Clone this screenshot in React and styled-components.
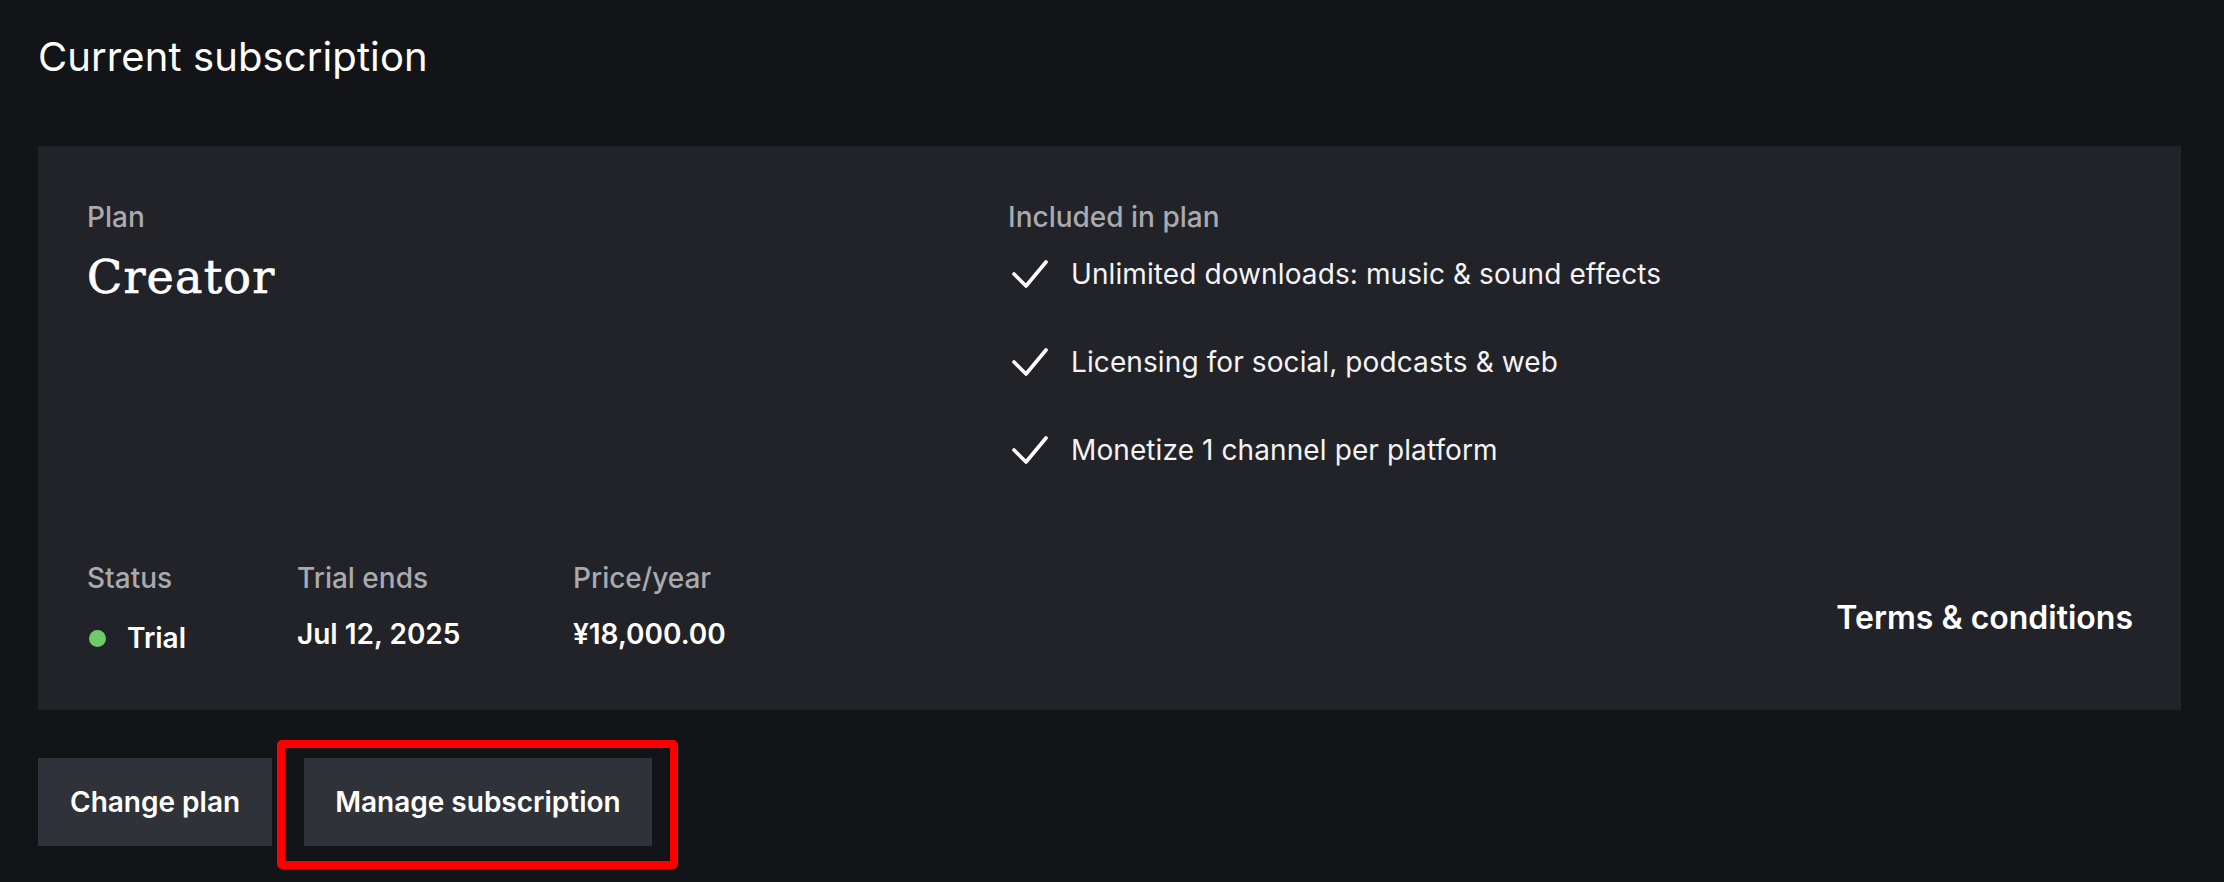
import React from 'react';
import styled, { createGlobalStyle } from 'styled-components';

const GlobalStyle = createGlobalStyle`
    html, body {
        margin: 0;
        padding: 0;
        background: #131418;
    }
    body {
        font-family: Inter, "Noto Sans", "Liberation Sans", sans-serif;
        color: #ffffff;
        -webkit-font-smoothing: antialiased;
    }
`;

const Page = styled.main`
    min-height: 100vh;
    box-sizing: border-box;
    padding: 33px 43px 0 38px;
`;

const Title = styled.h2`
    margin: 0 0 65px;
    font-size: 40px;
    line-height: 48px;
    font-weight: 400;
    letter-spacing: 0.1px;
    color: #ffffff;
`;

const Card = styled.section`
    background: #222328;
    padding: 54px 48px 55px 49px;
    display: flex;
    flex-direction: column;
    gap: 94px;
`;

const TopRow = styled.div`
    display: grid;
    grid-template-columns: 921px 1fr;
`;

const Label = styled.div`
    font-size: 28px;
    line-height: 34px;
    font-weight: 500;
    color: #a9aaaf;
`;

const PlanName = styled.div`
    margin-top: 17px;
    font-family: "DejaVu Serif", "Liberation Serif", serif;
    font-size: 46px;
    line-height: 52px;
    letter-spacing: 1.2px;
    -webkit-text-stroke: 0.7px #ffffff;
    color: #ffffff;
`;

const FeatureList = styled.ul`
    list-style: none;
    margin: 23px 0 0;
    padding: 0;
    display: flex;
    flex-direction: column;
    gap: 54px;
`;

const Feature = styled.li`
    display: flex;
    align-items: center;
    gap: 23px;
    font-size: 28px;
    line-height: 34px;
    letter-spacing: 0.1px;
    color: #f4f4f5;
    padding-left: 4px;
`;

const BottomRow = styled.div`
    display: flex;
    align-items: flex-start;
`;

const Stat = styled.div`
    width: ${props => props.width ? props.width + 'px' : 'auto'};
    display: flex;
    flex-direction: column;
    gap: 22px;
`;

const Value = styled.div`
    display: flex;
    align-items: center;
    gap: 21px;
    font-size: 28px;
    line-height: 34px;
    font-weight: 600;
    color: #ffffff;
    padding-top: ${props => props.offset || 0}px;
`;

const Dot = styled.span`
    width: 17px;
    height: 17px;
    border-radius: 50%;
    background: #72c96b;
    margin-left: 2px;
`;

const TermsLink = styled.a`
    margin-left: auto;
    margin-top: 38px;
    font-size: 32px;
    line-height: 38px;
    font-weight: 600;
    color: #ffffff;
    text-decoration: none;
    cursor: pointer;
`;

const Actions = styled.div`
    display: flex;
    gap: 32px;
    margin-top: 48px;
`;

const Highlight = styled.div`
    position: relative;
    display: flex;
    &:after {
        content: '';
        position: absolute;
        top: -18px;
        left: -27px;
        right: -26px;
        bottom: -23px;
        border: 8px solid #ff0000;
        border-radius: 5px;
        pointer-events: none;
    }
`;

const Button = styled.button`
    height: 88px;
    padding: 0 ${props => props.pad || 32}px;
    border: none;
    border-radius: 0;
    background: #30323a;
    color: #ffffff;
    font-family: Inter, "Noto Sans", "Liberation Sans", sans-serif;
    font-size: 28px;
    font-weight: 600;
    cursor: pointer;
`;

const Check = () => (
    <svg width="36" height="28" viewBox="0 0 36 28" fill="none">
        <polyline points="2,14 14,26 34,2" stroke="#ffffff" strokeWidth="3.6" strokeLinecap="round" strokeLinejoin="round" />
    </svg>
);

const features = [
    'Unlimited downloads: music & sound effects',
    'Licensing for social, podcasts & web',
    'Monetize 1 channel per platform',
];

export default function App() {
    return (
        <>
            <GlobalStyle />
            <Page>
                <Title>Current subscription</Title>
                <Card>
                    <TopRow>
                        <div>
                            <Label>Plan</Label>
                            <PlanName>Creator</PlanName>
                        </div>
                        <div>
                            <Label>Included in plan</Label>
                            <FeatureList>
                                {features.map(f => (
                                    <Feature key={f}><Check />{f}</Feature>
                                ))}
                            </FeatureList>
                        </div>
                    </TopRow>
                    <BottomRow>
                        <Stat width={210}>
                            <Label>Status</Label>
                            <Value offset={4}><Dot />Trial</Value>
                        </Stat>
                        <Stat width={276}>
                            <Label>Trial ends</Label>
                            <Value>Jul 12, 2025</Value>
                        </Stat>
                        <Stat>
                            <Label>Price/year</Label>
                            <Value>¥18,000.00</Value>
                        </Stat>
                        <TermsLink>Terms &amp; conditions</TermsLink>
                    </BottomRow>
                </Card>
                <Actions>
                    <Button pad={32}>Change plan</Button>
                    <Highlight>
                        <Button pad={31}>Manage subscription</Button>
                    </Highlight>
                </Actions>
            </Page>
        </>
    );
}
